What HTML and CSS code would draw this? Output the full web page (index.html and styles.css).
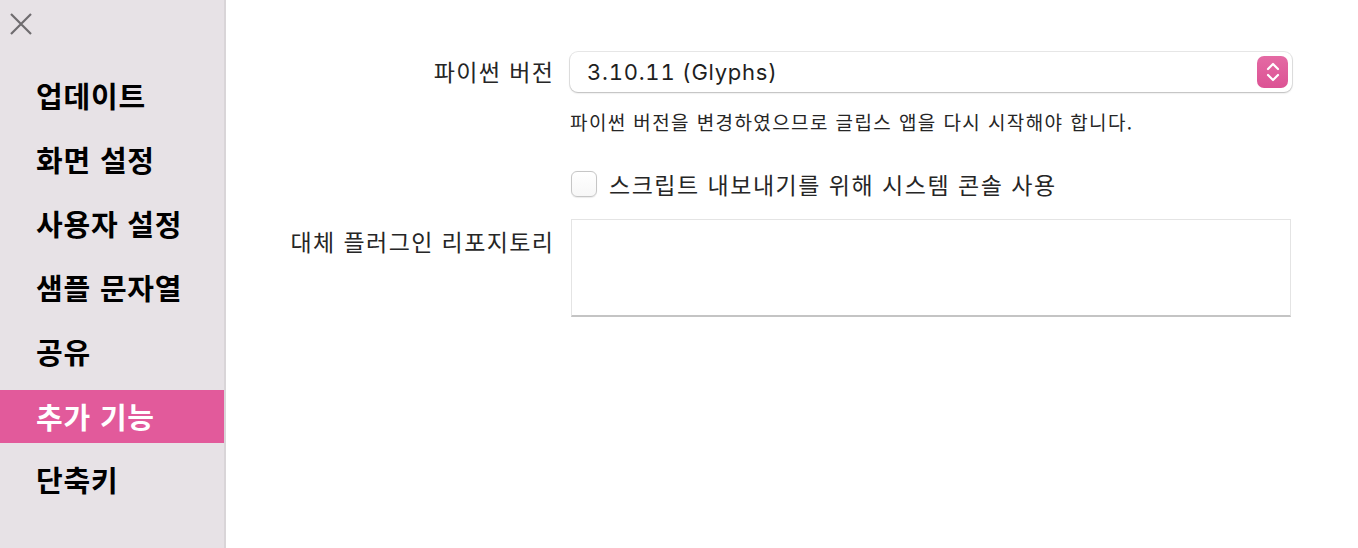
FILE: index.html
```html
<!DOCTYPE html>
<html lang="ko">
<head>
<meta charset="utf-8">
<title>설정</title>
<link rel="stylesheet" href="styles.css">
</head>
<body>
<div class="window">
  <aside class="sidebar">
    <div class="close-row">
      <svg class="close-icon" width="22" height="22" viewBox="0 0 22 22"><path d="M1 1 L21 21 M21 1 L1 21" stroke="#6f6c6f" stroke-width="2.2" fill="none"/></svg>
    </div>
    <nav class="nav">
      <div class="nav-item">업데이트</div>
      <div class="nav-item">화면 설정</div>
      <div class="nav-item">사용자 설정</div>
      <div class="nav-item">샘플 문자열</div>
      <div class="nav-item">공유</div>
      <div class="nav-item active">추가 기능</div>
      <div class="nav-item">단축키</div>
    </nav>
  </aside>
  <main class="content">
    <div class="form">
      <div class="label">파이썬 버전</div>
      <div class="popup">
        <span class="popup-text">3.10.11 (Glyphs)</span>
        <span class="stepper">
          <svg width="14" height="22" viewBox="0 0 14 22"><path d="M2 8 L7 3 L12 8 M2 14 L7 19 L12 14" stroke="#fff" stroke-width="2.2" fill="none" stroke-linecap="round" stroke-linejoin="round"/></svg>
        </span>
      </div>
      <div></div>
      <div class="note">파이썬 버전을 변경하였으므로 글립스 앱을 다시 시작해야 합니다.</div>
      <div></div>
      <label class="check-row"><span class="checkbox"></span><span class="check-label">스크립트 내보내기를 위해 시스템 콘솔 사용</span></label>
      <div class="label row-area">대체 플러그인 리포지토리</div>
      <div class="textarea"></div>
    </div>
  </main>
</div>
</body>
</html>
```
FILE: styles.css
```css
html, body {
  margin: 0;
  padding: 0;
  background: #ffffff;
}
body {
  font-family: "Noto Sans CJK KR", "Noto Sans", sans-serif;
  color: #262626;
}
.window {
  display: flex;
  height: 548px;
  width: 1358px;
  overflow: hidden;
}
.sidebar {
  width: 224px;
  flex: none;
  background: #e7e2e6;
  border-right: 2px solid #d9d5d8;
  display: flex;
  flex-direction: column;
}
.close-row {
  height: 48px;
  padding: 13px 0 0 10px;
  box-sizing: border-box;
}
.close-icon {
  display: block;
}
.nav {
  margin-top: 22px;
  display: flex;
  flex-direction: column;
  gap: 11px;
}
.nav-item {
  height: 53px;
  box-sizing: border-box;
  padding-bottom: 3px;
  display: flex;
  align-items: center;
  padding-left: 36px;
  font-size: 29px;
  font-weight: 700;
  color: #000;
  letter-spacing: 0.8px;
}
.nav-item.active {
  background: #e25a9b;
  color: #fff;
  padding-bottom: 1px;
}
.content {
  flex: 1;
}
.form {
  display: grid;
  grid-template-columns: 327px 722px;
  column-gap: 17px;
  padding-top: 52px;
  align-items: center;
}
.label {
  text-align: right;
  font-size: 23px;
  line-height: 30px;
  color: #262626;
  letter-spacing: 1.4px;
  margin-right: -1.4px;
  padding-bottom: 3px;
  white-space: nowrap;
}
.row-area {
  align-self: start;
  margin-top: 27px;
  padding-bottom: 0;
}
.popup {
  height: 40px;
  box-sizing: border-box;
  background: #fff;
  border-radius: 8px;
  box-shadow: 0 0 0 1px rgba(0,0,0,0.09), 0 1px 2px rgba(0,0,0,0.2);
  display: flex;
  align-items: center;
  justify-content: space-between;
  padding: 0 4px 0 17px;
}
.popup-text {
  font-family: "Inter", "Noto Sans", sans-serif;
  font-size: 22px;
  font-variant-numeric: tabular-nums;
  letter-spacing: 0.75px;
  color: #1f1f1f;
}
.stepper {
  width: 31px;
  height: 32px;
  border-radius: 7px;
  background: linear-gradient(#e46aa4, #dc5294);
  display: flex;
  align-items: center;
  justify-content: center;
}
.stepper svg { display: block; }
.note {
  margin-top: 16px;
  font-size: 19px;
  color: #262626;
  line-height: 28px;
  letter-spacing: 1.4px;
  white-space: nowrap;
}
.check-row {
  margin-top: 33px;
  display: flex;
  align-items: center;
  gap: 12px;
  padding-left: 1px;
}
.checkbox {
  width: 26px;
  height: 26px;
  flex: none;
  box-sizing: border-box;
  border: 1px solid #c6c6c6;
  border-radius: 6px;
  background: linear-gradient(#ffffff, #f7f7f7);
  box-shadow: 0 0.5px 1px rgba(0,0,0,0.08);
}
.check-label {
  font-size: 23px;
  line-height: 30px;
  color: #262626;
  letter-spacing: 1.5px;
  white-space: nowrap;
}
.textarea {
  margin-top: 20px;
  margin-left: 1px;
  width: 720px;
  height: 98px;
  box-sizing: border-box;
  border: 1px solid #e4e4e4;
  border-bottom: 2px solid #c4c4c4;
  background: #fff;
}
```
